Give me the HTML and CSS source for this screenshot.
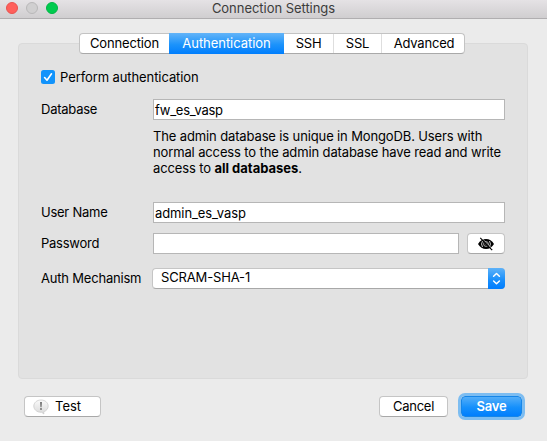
FILE: index.html
```
<!DOCTYPE html>
<html lang="en">
<head>
<meta charset="utf-8">
<title>Connection Settings</title>
<link rel="stylesheet" href="styles.css">
</head>
<body>
<div class="window">
  <header class="titlebar">
    <div class="lights"><i class="light close"></i><i class="light minimize"></i><i class="light zoom"></i></div>
    <h1 class="title">Connection Settings</h1>
  </header>
  <main class="content">
    <nav class="tabs">
      <span class="tab connection">Connection</span>
      <span class="tab active">Authentication</span>
      <span class="tab ssh">SSH</span>
      <span class="tab ssl">SSL</span>
      <span class="tab advanced">Advanced</span>
    </nav>
    <section class="panel">
      <div class="check">
        <svg class="box" width="14" height="14" viewBox="0 0 14 14"><rect width="14" height="14" rx="2.5" fill="#1293fb"/><path d="M3.6 7.5 6 10.2 10.5 3.8" fill="none" stroke="#fff" stroke-width="1.6" stroke-linecap="round" stroke-linejoin="round"/></svg>
        <span class="check-label">Perform authentication</span>
      </div>
      <div class="row database"><span class="label">Database</span><div class="field">fw_es_vasp</div></div>
      <p class="hint">The admin database is unique in MongoDB. Users with<br>normal access to the admin database have read and write<br>access to <b>all databases</b>.</p>
      <div class="row user"><span class="label">User Name</span><div class="field admin">admin_es_vasp</div></div>
      <div class="row password"><span class="label">Password</span><div class="field"></div>
        <div class="button eye"><svg width="18" height="14" viewBox="0 0 18 14"><path d="M1 7Q4 2 9 2T17 7Q14 12 9 12T1 7Z" fill="#000"/><path d="M5.5 4Q3.6 7 5.5 10M12.5 4Q14.4 7 12.5 10" fill="none" stroke="#fff" stroke-width=".8"/><circle cx="9" cy="7" r="2.4" fill="none" stroke="#ccc" stroke-width=".8"/><circle cx="9" cy="7" r=".7" fill="#aaa"/><path d="M3.3.9 15.2 13.2" stroke="#000" stroke-width="1.2"/><path d="M4.6.8 15.6 12" stroke="#fff" stroke-width=".5"/></svg></div>
      </div>
      <div class="row mechanism"><span class="label auth">Auth Mechanism</span><div class="select"><span>SCRAM-SHA-1</span><div class="stepper"><svg width="17" height="21" viewBox="0 0 17 21"><path d="M5.6 8.3 8.5 5.5 11.4 8.3M5.6 13 8.5 15.8 11.4 13" fill="none" stroke="#fff" stroke-width="1.5" stroke-linecap="round" stroke-linejoin="round"/></svg></div></div></div>
    </section>
  </main>
  <footer class="actions">
    <div class="button test"><svg width="16" height="16" viewBox="0 0 16 16"><defs><linearGradient id="bubble" x2="0" y2="1"><stop stop-color="#fafafa"/><stop offset="1" stop-color="#d9d9d9"/></linearGradient></defs><path d="M8 1C3.7 1 .8 3.8.8 7.1S3.7 13.3 8 13.3l.7 0 2.2 1.7-.2-2.2c2.8-1 4.5-3.2 4.5-5.7C15.2 3.8 12.3 1 8 1Z" fill="url(#bubble)" stroke="#c6c6c6" stroke-width=".7"/><path d="M7.1 3h1.8l-.4 5.2h-1z" fill="#666"/><circle cx="8" cy="10" r=".9" fill="#666"/></svg><span class="caption">Test</span></div>
    <div class="button cancel"><span class="caption">Cancel</span></div>
    <div class="button save"><span class="caption">Save</span></div>
  </footer>
</div>
</body>
</html>
```
FILE: styles.css
```
* { box-sizing: border-box; }
body { margin: 0; background: #ebebeb; color: #000; font: 13px/16px Inter, "Liberation Sans", sans-serif; letter-spacing: -.25px; white-space: nowrap; }
.window { width: 547px; height: 441px; overflow: hidden; }
.titlebar { height: 19px; background: linear-gradient(#e5e2e5, #d0ced0); border-bottom: 1px solid #b0aeb0; display: grid; grid-template-columns: 65px 1fr 65px; }
.lights { display: flex; gap: 8px; padding: 2px 0 0 6px; }
.light { width: 12px; height: 12px; border-radius: 50%; border: 1px solid; }
.close { background: #ff5f5b; border-color: #e9524f; }
.minimize { background: #d0cfd0; border-color: #b9b8b9; }
.zoom { background: #00cb4e; border-color: #00b646; }
.title { margin: 0; font-size: 13px; font-weight: 400; line-height: 16px; text-align: center; color: #3c3c3c; letter-spacing: -.04px; }
.content { padding: 14px 19px 0 18px; }
.tabs { position: relative; display: flex; width: 386px; height: 21px; margin-left: 61px; background: #fff; border: 1px solid #c3c3c3; border-bottom-color: #a9a9a9; border-radius: 4px; }
.tab { text-align: center; line-height: 18px; border-right: 1px solid #dedede; height: 19px; }
.connection { width: 89px; border: 0; letter-spacing: -.15px; }
.active { width: 115px; height: 21px; margin-top: -1px; line-height: 20px; background: linear-gradient(#63b4f8, #1c93fb 55%, #007efd); color: #fff; border: 0; letter-spacing: -.05px; }
.ssh { width: 50px; }
.ssl { width: 48px; }
.advanced { flex: 1; border: 0; padding-left: 2px; letter-spacing: -.2px; }
.panel { height: 336px; margin-top: -11px; padding: 25px 22px 0 22px; background: #e2e2e2; border: 1px solid #dadada; border-radius: 4px; }
.check { display: flex; align-items: center; height: 16px; gap: 5px; letter-spacing: -.09px; }
.box { display: block; }
.row { display: grid; grid-template-columns: 112px 1fr; height: 21px; }
.label { padding-top: 2px; }
.auth { letter-spacing: -.2px; }
.database { margin-top: 14px; }
.field { height: 21px; background: #fff; border: 1px solid #b6b6b6; padding-left: 1px; line-height: 20px; }
.admin { letter-spacing: -.1px; }
.hint { margin: 8px 0 0 112px; line-height: 16px; letter-spacing: -.13px; }
.hint b { letter-spacing: 0; }
.user { margin-top: 26px; }
.password { margin-top: 10px; grid-template-columns: 112px 306px 46px; }
.button { height: 21px; display: flex; align-items: center; justify-content: center; background: #fff; border: 1px solid #c5c5c5; border-bottom-color: #a8a8a8; border-radius: 4px; }
.caption { padding-bottom: 1px; display: block; }
.eye { margin-left: 8px; width: 38px; }
.mechanism { margin-top: 14px; grid-template-columns: 111px 1fr; }
.select { display: flex; justify-content: space-between; height: 21px; padding-left: 8px; background: #fff; border: 1px solid #c5c5c5; border-bottom-color: #a8a8a8; border-radius: 4px; line-height: 16px; letter-spacing: -.15px; }
.stepper { width: 17px; height: 21px; margin: -1px -1px 0 0; background: linear-gradient(#5eb2f8, #1b90fb 55%, #007dfe); border-radius: 0 4px 4px 0; }
.stepper svg, .button svg { display: block; }
.actions { display: flex; padding: 17px 25px 0 24px; }
.test { width: 77px; gap: 6px; padding-right: 11px; letter-spacing: -.05px; }
.cancel { width: 69px; margin-left: auto; }
.save { width: 61px; margin-left: 13px; background: linear-gradient(#54aef8, #1590fc 55%, #007efd); border-color: #1686e8; color: #fff; font-weight: 600; box-shadow: 0 0 0 3px #7dbdf1; }
```
